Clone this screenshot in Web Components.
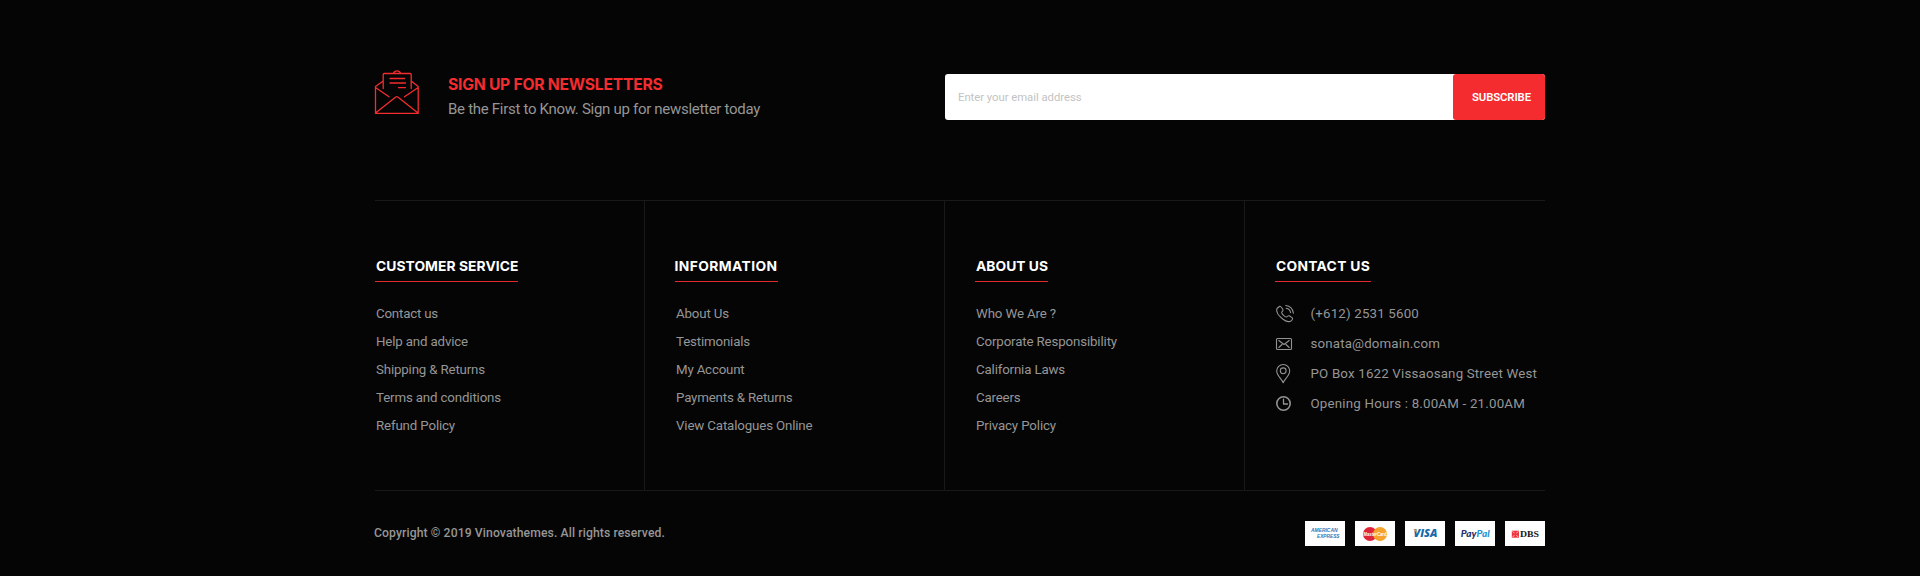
<!DOCTYPE html>
<html lang="en">
<head>
<meta charset="utf-8">
<title>Footer</title>
<style>
html,body{margin:0;background:#050505;height:576px;overflow:hidden}
body{font-family:Roboto,"Liberation Sans",sans-serif;color:#969696}
</style>
</head>
<body>
<site-footer></site-footer>
<script>
// A single line of text tracked to a given advance width.
class TextLine extends HTMLElement {
  connectedCallback() {
    if (this.shadowRoot) return;
    this.attachShadow({mode: 'open'}).innerHTML =
      '<style>:host{display:inline-block;white-space:nowrap;text-indent:0}</style><span><slot></slot></span>';
    const want = parseFloat(this.getAttribute('w'));
    const n = this.textContent.length;
    const have = this.getBoundingClientRect().width;
    if (want && have) {
      this.style.letterSpacing = ((want - have) / n).toFixed(3) + 'px';
    }
  }
}

class NewsLetter extends HTMLElement {
  connectedCallback() {
    this.attachShadow({mode: 'open'}).innerHTML = `
<style>
:host{display:flex;height:200px;box-sizing:border-box;padding-top:70px;align-items:flex-start}
svg{width:46px;height:46px;margin-left:-1px;flex:none}
.copy{margin-left:28px;padding-top:3px;flex:1}
h2{margin:0;font:700 15.700px/24px Inter,sans-serif;color:#f42c2f;height:24px}
p{margin:0;font-size:15px;line-height:24px;height:24px}
form{display:flex;width:600px;height:46px;margin-top:4px;background:#fff;border-radius:3px}
.field{flex:1;padding-left:13px;font-size:11.300px;line-height:47px;color:#c3c3c3}
.btn{width:92px;background:#f42c2f;border-radius:3px;color:#fff;font-weight:600;font-size:11.300px;line-height:47px;height:46px;padding-left:19px;box-sizing:border-box}
</style>
<svg viewBox="0 0 46 46" fill="none" stroke="#f42c2f" stroke-width="1.3" stroke-linejoin="round" stroke-linecap="round">
<path d="M9.200 18.500V4.500a1 1 0 0 1 1-1h26a1 1 0 0 1 1 1v14M19.500 3.200C20.500 .2 25.500 .2 26.500 3.200M16 8.500h14.500M16 13h15.500M24.500 17.700h7M8.800 11.300 1.500 16.500V43.300H44.200V16.500L37.500 11.300M1.500 17.500 15 26.800M44.200 17.500 30.500 26.800M1.500 43 21.800 27q1-.8 2 0L44 43"/>
</svg>
<div class="copy"><h2><text-line w="214.500">SIGN UP FOR NEWSLETTERS</text-line></h2>
<p><text-line w="312">Be the First to Know. Sign up for newsletter today</text-line></p></div>
<form><div class="field"><text-line w="123.500">Enter your email address</text-line></div><div class="btn"><text-line w="59">SUBSCRIBE</text-line></div></form>`;
  }
}

class FooterColumn extends HTMLElement {
  connectedCallback() {
    const [tw, uw, pad] = this.getAttribute('fit').split(' ');
    this.attachShadow({mode: 'open'}).innerHTML = `
<style>
:host{display:block;box-sizing:border-box;height:289px;padding:53px 0 0 30px;border-right:1px solid #191919}
:host([first]){padding-left:0}
:host([last]){border-right:0}
h3{margin:0;font:700 13.800px/25px Inter,sans-serif;color:#fff;height:27px;border-bottom:1px solid #e22b2e;width:${uw}px;text-indent:${pad}px;white-space:nowrap}
.items{padding:18px 0 0 1px}
</style>
<h3><text-line w="${tw}">${this.getAttribute('heading')}</text-line></h3>
<div class="items"><slot></slot></div>`;
  }
}

class FooterLink extends HTMLElement {
  connectedCallback() {
    this.attachShadow({mode: 'open'}).innerHTML = `
<style>:host{display:block;height:28px;font-size:13.300px;line-height:28px}</style>
<text-line w="${this.getAttribute('w') - 1}">${this.getAttribute('label')}</text-line>`;
  }
}

const ICONS = {
  phone: '<path stroke-width="1.100" d="M.8 5C1.500 3.500 2.500 3 3.800 2.200 4.700 2 5.200 2.700 7 5.700 7.300 6.500 6.800 7.200 5.700 8.200 5.500 10 9 13.200 10.700 13 11.500 12 12.200 11.400 13.200 11.800L16 13.600C17 14.300 16.700 15 15.700 16.300 14 18.200 11 18.200 7 15.200 3 12 -.1 8 .8 5ZM10.200 4.200q3.800.6 4.400 4.400M9.700 1.500q6.800.7 7.700 7.700"/>',
  mail: '<rect x=".5" y="4.500" width="15" height="11" rx="1" stroke-width="1.100"/><path stroke-width="1.100" d="M2.800 6.500 8 10.500 13.200 6.500M2.800 13.500 6 10.500M13.200 13.500 10 10.500"/>',
  pin: '<path stroke-width="1.100" d="M7.200 18.700C5.700 15 .7 11.500 .7 7a6.500 6.500 0 0 1 13 0C13.700 11.500 8.700 15 7.200 18.700Z"/><circle cx="7.200" cy="6.800" r="2.900" stroke-width="1.100"/>',
  clock: '<circle cx="7.500" cy="9.500" r="6.700" stroke-width="1.600"/><path stroke-width="1.300" d="M7.500 5.200V10H11.500"/>'
};
class ContactItem extends HTMLElement {
  connectedCallback() {
    this.attachShadow({mode: 'open'}).innerHTML = `
<style>
:host{display:flex;height:30px;align-items:center;font-size:13.300px;line-height:30px}
:host(:first-of-type){margin-top:-1px}
svg{width:20px;height:20px;margin-right:14.500px;flex:none;fill:none;stroke:#939393;stroke-linecap:round;stroke-linejoin:round;overflow:visible}
</style>
<svg viewBox="0 0 20 20">${ICONS[this.getAttribute('icon')]}</svg>
<text-line w="${this.getAttribute('w') - 0.5}">${this.getAttribute('label')}</text-line>`;
  }
}

const CARDS = {
  amex: '<g fill="#2b78b8" font-family="Liberation Sans,sans-serif" font-weight="700" font-style="italic" font-size="4.500"><text x="6" y="11.300" textLength="26.500" lengthAdjust="spacingAndGlyphs">AMERICAN</text><text x="12" y="17" textLength="22.500" lengthAdjust="spacingAndGlyphs">EXPRESS</text></g>',
  mastercard: '<circle cx="15" cy="13" r="7" fill="#df2338"/><circle cx="25" cy="13" r="7" fill="#f5a32c"/><text x="8.500" y="15" fill="#fff" font-family="Liberation Sans,sans-serif" font-weight="700" font-size="5.500" textLength="23" lengthAdjust="spacingAndGlyphs">MasterCard</text>',
  visa: '<text x="8.500" y="16.300" fill="#1769ad" font-family="Open Sans,sans-serif" font-weight="800" font-style="italic" font-size="10.800" textLength="24" lengthAdjust="spacingAndGlyphs">VISA</text><path d="M8 8.600H11.200L12 12Q10.500 9.700 8 8.600Z" fill="#efa52b"/>',
  paypal: '<text x="5.800" y="15.600" font-family="Lato,sans-serif" font-weight="900" font-style="italic" font-size="8.500" textLength="29" lengthAdjust="spacingAndGlyphs"><tspan fill="#28306a">Pay</tspan><tspan fill="#2c93ce">Pal</tspan></text>',
  dbs: '<rect x="6.800" y="9.700" width="7.200" height="7" fill="#ee3440"/><path d="M7.500 10.300 13.300 16.100M13.300 10.300 7.500 16.100" stroke="#fff" stroke-width=".7"/><rect x="9.200" y="12" width="2.400" height="2.400" fill="#ee3440"/><text x="15" y="16.300" fill="#161616" font-family="Liberation Serif,serif" font-weight="700" font-size="9.200" textLength="19" lengthAdjust="spacingAndGlyphs">DBS</text>'
};
class PayCard extends HTMLElement {
  connectedCallback() {
    this.attachShadow({mode: 'open'}).innerHTML = `
<style>:host{display:block;width:40px;height:25px;background:#fff}svg{display:block}</style>
<svg width="40" height="25" viewBox="0 0 40 25">${CARDS[this.getAttribute('brand')]}</svg>`;
  }
}

class SiteFooter extends HTMLElement {
  connectedCallback() {
    const links = a => a.map(([t, w]) => `<footer-link label="${t}" w="${w}"></footer-link>`).join('');
    this.attachShadow({mode: 'open'}).innerHTML = `
<style>
:host{display:block;width:1170px;margin:0 auto}
.columns{display:grid;grid-template-columns:270px 300px 300px 300px;border-top:1px solid #191919;border-bottom:1px solid #191919}
.bottom{display:flex;height:85px;justify-content:space-between;align-items:flex-start;padding-top:30px;box-sizing:border-box}
.copy{font-size:12.200px;font-weight:500;line-height:24px;margin-left:-1px}
.cards{display:flex;gap:10px}
</style>
<news-letter></news-letter>
<div class="columns">
<footer-column first heading="CUSTOMER SERVICE" fit="142.5 143 1">${links([['Contact us',63],['Help and advice',93],['Shipping &amp;amp; Returns',110],['Terms and conditions',126],['Refund Policy',80]])}</footer-column>
<footer-column heading="INFORMATION" fit="103 103 -0.5">${links([['About Us',54],['Testimonials',75],['My Account',69.500],['Payments &amp;amp; Returns',117.500],['View Catalogues Online',137.500]])}</footer-column>
<footer-column heading="ABOUT US" fit="72 73 1">${links([['Who We Are ?',81],['Corporate Responsibility',142],['California Laws',90],['Careers',45.500],['Privacy Policy',81]])}</footer-column>
<footer-column last heading="CONTACT US" fit="94 96 1">
<contact-item icon="phone" label="(+612) 2531 5600" w="109"></contact-item>
<contact-item icon="mail" label="sonata@domain.com" w="130"></contact-item>
<contact-item icon="pin" label="PO Box 1622 Vissaosang Street West" w="227"></contact-item>
<contact-item icon="clock" label="Opening Hours : 8.00AM - 21.00AM" w="215"></contact-item>
</footer-column>
</div>
<div class="bottom">
<div class="copy"><text-line w="291">Copyright © 2019 Vinovathemes. All rights reserved.</text-line></div>
<div class="cards"><pay-card brand="amex"></pay-card><pay-card brand="mastercard"></pay-card><pay-card brand="visa"></pay-card><pay-card brand="paypal"></pay-card><pay-card brand="dbs"></pay-card></div>
</div>`;
  }
}

customElements.define('site-footer', SiteFooter);
customElements.define('news-letter', NewsLetter);
customElements.define('footer-column', FooterColumn);
customElements.define('footer-link', FooterLink);
customElements.define('contact-item', ContactItem);
customElements.define('pay-card', PayCard);
customElements.define('text-line', TextLine);
</script>
</body>
</html>
